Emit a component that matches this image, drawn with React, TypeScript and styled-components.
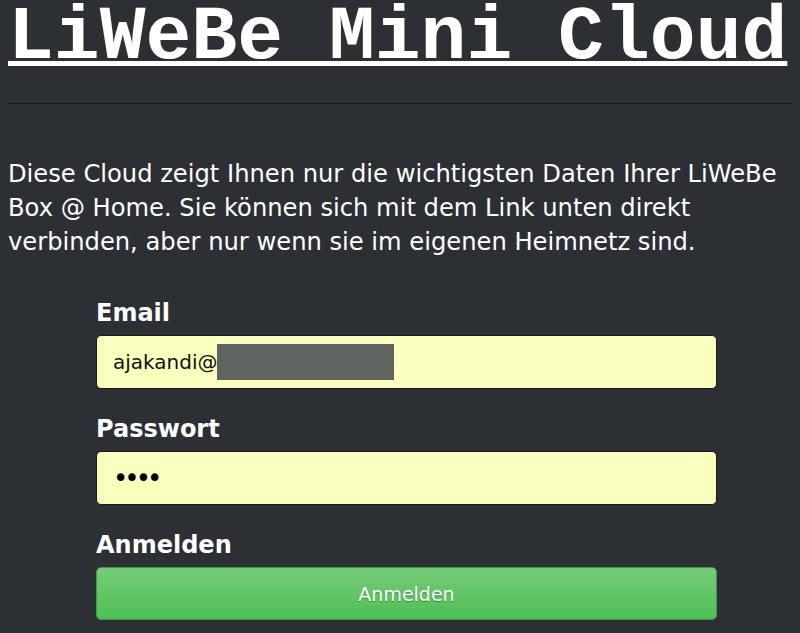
import React from "react";
import styled, { createGlobalStyle } from "styled-components";

const Global = createGlobalStyle`
  html, body { margin: 0; padding: 0; background: #2c2f34; }
  body { font-family: "DejaVu Sans", Verdana, sans-serif; color: #fff; }
`;

const Page = styled.div`
  padding: 0 8px;
  min-height: 633px;
  box-sizing: border-box;
  overflow: hidden;
`;

const Title = styled.h1`
  margin: 0;
  font-family: "Liberation Mono", "Courier New", monospace;
  font-weight: bold;
  font-size: 76.4px;
  line-height: 76px;
  color: #fff;
  text-decoration: underline;
  text-decoration-thickness: 5px;
  text-underline-offset: 3px;
  white-space: nowrap;
`;

const Rule = styled.hr`
  margin: 27px 0 0;
  border: 0;
  height: 1px;
  background: #1b1d20;
`;

const Intro = styled.p`
  margin: 53px 0 0;
  font-size: 24.2px;
  line-height: 34px;
  color: #fff;
`;

const Form = styled.form`
  margin: 40px 0 0 88px;
  width: 621px;
  display: flex;
  flex-direction: column;
`;

const Label = styled.label`
  font-weight: bold;
  font-size: 24px;
  line-height: 28px;
  color: #fff;
  margin-bottom: 8px;
`;

const Field = styled.div`
  height: 54px;
  box-sizing: border-box;
  background: #fbffbd;
  border: 1px solid #16181a;
  border-radius: 5px;
  display: flex;
  align-items: center;
  padding-left: 16px;
  color: #111;
  font-size: 20px;
  margin-bottom: 26px;
`;

const Redacted = styled.span`
  display: inline-block;
  width: 177px;
  height: 36px;
  background: #5e6460;
`;

const Dots = styled.span`
  font-size: 26px;
  letter-spacing: -4px;
  color: #000;
`;

const Button = styled.button`
  height: 53px;
  border: 1px solid #3f9a45;
  border-radius: 5px;
  background: linear-gradient(#76cb78, #4fbf55);
  color: #fff;
  font-family: "DejaVu Sans", Verdana, sans-serif;
  font-size: 19px;
  text-shadow: 0 1px 1px rgba(0, 0, 0, 0.35);
  cursor: pointer;
`;

export default function App() {
  return (
    <Page>
      <Global />
      <Title>LiWeBe Mini Cloud</Title>
      <Rule />
      <Intro>
        Diese Cloud zeigt Ihnen nur die wichtigsten Daten Ihrer LiWeBe Box @ Home. Sie können sich mit dem Link unten direkt verbinden, aber nur wenn sie im eigenen Heimnetz sind.
      </Intro>
      <Form onSubmit={(e) => e.preventDefault()}>
        <Label>Email</Label>
        <Field>
          ajakandi@<Redacted />
        </Field>
        <Label>Passwort</Label>
        <Field>
          <Dots>••••</Dots>
        </Field>
        <Label>Anmelden</Label>
        <Button type="submit">Anmelden</Button>
      </Form>
    </Page>
  );
}
